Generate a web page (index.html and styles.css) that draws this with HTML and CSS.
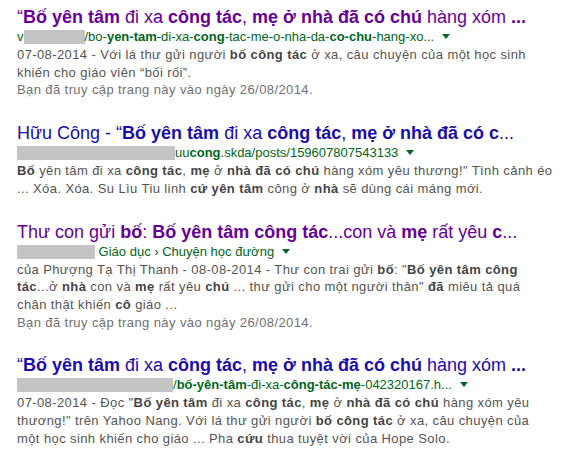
FILE: index.html
```html
<!DOCTYPE html>
<html lang="vi">
<head>
    <meta charset="UTF-8">
    <title>Kết quả tìm kiếm</title>
    <link rel="stylesheet" href="styles.css">
</head>
<body>
    <div class="results">
        <div class="result">
            <h3 class="title visited"><a>“<b>Bố yên tâm</b> đi xa <b>công tác</b>, <b>mẹ ở nhà đã có chú</b> hàng xóm <b>...</b></a></h3>
            <div class="url">v<span class="blur" style="width:61px"></span>/bo-<b>yen-tam</b>-di-xa-<b>cong</b>-tac-me-o-nha-da-<b>co-chu</b>-hang-xo... <span class="arrow"></span></div>
            <div class="snippet">07-08-2014 - Với lá thư gửi người <b>bố công tác</b> ở xa, câu chuyện của một học sinh<br>khiến cho giáo viên “bối rối”.</div>
            <div class="visit">Bạn đã truy cập trang này vào ngày 26/08/2014.</div>
        </div>
        <div class="result">
            <h3 class="title"><a>Hữu Công - “<b>Bố yên tâm</b> đi xa <b>công tác</b>, <b>mẹ ở nhà đã có c</b>...</a></h3>
            <div class="url"><span class="blur" style="width:158px"></span>uu<b>cong</b>.skda/posts/159607807543133 <span class="arrow"></span></div>
            <div class="snippet"><b>Bố</b> yên tâm đi xa <b>công tác</b>, <b>mẹ</b> ở <b>nhà đã có chú</b> hàng xóm yêu thương!" Tình cảnh éo<br>... Xóa. Xóa. Su Lìu Tiu linh <b>cứ yên tâm</b> công ở <b>nhà</b> sẽ dùng cái máng mới.</div>
        </div>
        <div class="result">
            <h3 class="title visited"><a>Thư con gửi <b>bố</b>: <b>Bố yên tâm công tác</b>...con và <b>mẹ</b> rất yêu <b>c</b>...</a></h3>
            <div class="url"><span class="blur" style="width:78px"></span> Giáo dục › Chuyện học đường <span class="arrow"></span></div>
            <div class="snippet">của Phượng Tạ Thị Thanh - 08-08-2014 - Thư con trai gửi <b>bố</b>: "<b>Bố yên tâm công</b><br><b>tác</b>...ở <b>nhà</b> con và <b>mẹ</b> rất yêu <b>chú</b> ... thư gửi cho một người thân" <b>đã</b> miêu tả quá<br>chân thật khiến <b>cô</b> giáo ...</div>
            <div class="visit">Bạn đã truy cập trang này vào ngày 26/08/2014.</div>
        </div>
        <div class="result">
            <h3 class="title"><a>“<b>Bố yên tâm</b> đi xa <b>công tác</b>, <b>mẹ ở nhà đã có chú</b> hàng xóm <b>...</b></a></h3>
            <div class="url"><span class="blur" style="width:156px"></span>/<b>bố-yên-tâm</b>-đi-xa-<b>công-tác-mẹ</b>-042320167.h... <span class="arrow"></span></div>
            <div class="snippet">07-08-2014 - Đọc "<b>Bố yên tâm</b> đi xa <b>công tác</b>, <b>mẹ</b> ở <b>nhà đã có chú</b> hàng xóm yêu<br>thương!" trên Yahoo Nang. Với lá thư gửi người <b>bố công tác</b> ở xa, câu chuyện của<br>một học sinh khiến cho giáo ... Pha <b>cứu</b> thua tuyệt vời của Hope Solo.</div>
        </div>
    </div>
</body>
</html>
```

FILE: styles.css
```css
body {
    margin: 0;
    background: #fff;
    font-family: "Liberation Sans", Arial, sans-serif;
}
.results {
    padding: 6px 0 0 17px;
}
.result {
    margin-bottom: 23px;
}
.title {
    margin: 0;
    font-size: 18px;
    font-weight: normal;
    line-height: 22px;
    white-space: nowrap;
}
.title a {
    color: #1a0dab;
}
.title.visited a {
    color: #609;
}
.url {
    font-size: 13px;
    line-height: 18px;
    color: #006621;
    white-space: nowrap;
}
.blur {
    display: inline-block;
    height: 14px;
    vertical-align: -3px;
    background: #c4c4c4;
}
.arrow {
    display: inline-block;
    margin-left: 4px;
    vertical-align: 2px;
    border-top: 5px solid #006621;
    border-left: 4px solid transparent;
    border-right: 4px solid transparent;
}
.snippet,
.visit {
    font-size: 13px;
    line-height: 17.7px;
    letter-spacing: 0.4px;
    color: #545454;
    white-space: nowrap;
}
.visit {
    color: #707070;
}
.snippet b {
    color: #444;
}
```
